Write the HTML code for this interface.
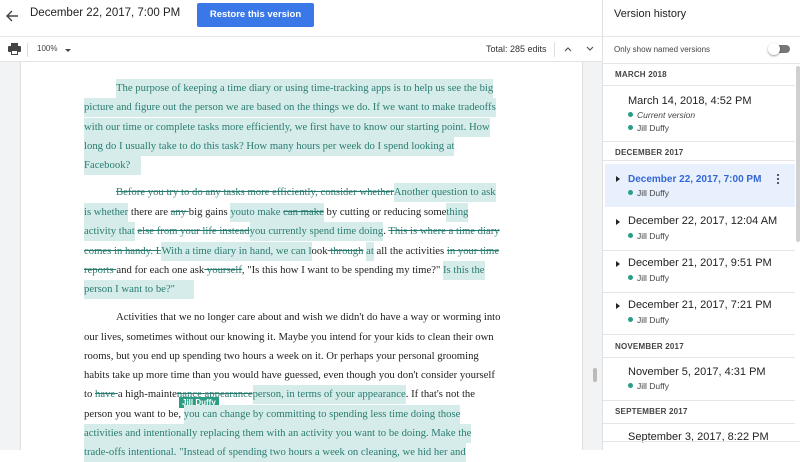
<!DOCTYPE html>
<html><head><meta charset="utf-8"><style>
*{margin:0;padding:0;box-sizing:border-box}
body{width:800px;height:450px;overflow:hidden;background:#fff;font-family:"Liberation Sans",sans-serif;position:relative;color:#202124}
.abs{position:absolute;white-space:nowrap}
#doc{position:absolute;left:0;top:62px;width:602px;height:388px;background:#f1f3f4}
#page{position:absolute;left:20px;top:0;width:563px;height:388px;background:#fff;border-left:1px solid #ddd;border-right:1px solid #ddd}
.ln{position:absolute;white-space:nowrap;font-family:"Liberation Serif",serif;font-size:10.7px;color:#222;line-height:19px}
.h{background:#d5ecea;color:#2a7c70;padding:3px 0 4px}
.s{text-decoration:line-through;color:#2a7c70}
.side{position:absolute;left:602px;top:0;width:198px;height:450px;border-left:1px solid #e0e0e0;background:#fff}
.hr{position:absolute;left:0;width:192px;height:1px;background:#e6e6e6}
.mon{position:absolute;left:12px;font-size:8px;font-weight:bold;color:#444;letter-spacing:.2px}
.dt{position:absolute;left:25px;font-size:11px;color:#222;white-space:nowrap}
.au{position:absolute;left:25px;font-size:8.5px;color:#444;white-space:nowrap}
.au:before{content:"";display:inline-block;width:5px;height:5px;border-radius:50%;background:#2a9d84;margin-right:4px;vertical-align:1px}
.tri{position:absolute;left:13px;width:0;height:0;border-left:4px solid #222;border-top:3.5px solid transparent;border-bottom:3.5px solid transparent}
</style></head><body>
<svg class="abs" style="left:5px;top:9px" width="14" height="14" viewBox="0 0 14 14"><path d="M13 7H2M7 2L2 7l5 5" stroke="#444" stroke-width="1.4" fill="none"/></svg>
<div class="abs" style="left:30px;top:7px;font-size:11.5px;color:#222">December 22, 2017, 7:00 PM</div>
<div class="abs" style="left:197px;top:3px;width:117px;height:24px;background:#3b78e7;border-radius:2px;color:#fff;font-size:9.5px;font-weight:bold;text-align:center;line-height:24px">Restore this version</div>
<div class="abs" style="left:0;top:36px;width:602px;height:1px;background:#e8e8e8"></div>
<svg class="abs" style="left:8px;top:43px" width="13" height="12" viewBox="0 0 13 12"><rect x="3" y="0" width="7" height="3" fill="#444"/><rect x="0" y="3" width="13" height="6" rx="1" fill="#444"/><rect x="3" y="7" width="7" height="5" fill="#444"/><rect x="4" y="8" width="5" height="3" fill="#fff"/></svg>
<div class="abs" style="left:27px;top:43px;width:1px;height:14px;background:#ddd"></div>
<div class="abs" style="left:37px;top:44px;font-size:8px;color:#444">100%</div>
<div class="abs" style="left:65px;top:49px;border-left:3px solid transparent;border-right:3px solid transparent;border-top:3px solid #444"></div>
<div class="abs" style="left:486px;top:44px;font-size:9px;color:#333">Total: 285 edits</div>
<div class="abs" style="left:554px;top:42px;width:1px;height:15px;background:#ddd"></div>
<svg class="abs" style="left:564px;top:46px" width="8" height="6"><path d="M1 5L4 2l3 3" stroke="#555" stroke-width="1.2" fill="none"/></svg>
<svg class="abs" style="left:586px;top:46px" width="8" height="6"><path d="M1 1l3 3 3-3" stroke="#555" stroke-width="1.2" fill="none"/></svg>
<div class="abs" style="left:0;top:61px;width:602px;height:2px;background:#e4e4e4"></div>
<div id="doc"><div id="page"></div>
<div class="abs" style="left:593px;top:306px;width:4px;height:14px;background:#bbb;border-radius:2px"></div></div>
<div class="ln" style="left:116px;top:79px"><span class="h">The purpose of keeping a time diary or using time-tracking apps is to help us see the big</span></div>
<div class="ln" style="left:84px;top:98px"><span class="h">picture and figure out the person we are based on the things we do. If we want to make tradeoffs</span></div>
<div class="ln" style="left:84px;top:118px"><span class="h">with our time or complete tasks more efficiently, we first have to know our starting point. How</span></div>
<div class="ln" style="left:84px;top:137px"><span class="h">long do I usually take to do this task? How many hours per week do I spend looking at</span></div>
<div class="ln" style="left:84px;top:156px"><span class="h">Facebook?&nbsp;&nbsp;&nbsp;&nbsp;</span></div>
<div class="ln" style="left:116px;top:183px"><span class="s">Before you try to do any tasks more efficiently, consider whether</span><span class="h">Another question to ask</span></div>
<div class="ln" style="left:84px;top:203px"><span class="h">is whether</span> there are <span class="s">any </span>big gains <span class="h">you</span><span class="h">to make <span class="s">can make</span></span> by cutting or reducing some<span class="h">thing</span></div>
<div class="ln" style="left:84px;top:222px"><span class="h">activity that</span> <span class="s">else from your life instead</span><span class="h">you currently spend time doing</span>. <span class="s">This is where a time diary</span></div>
<div class="ln" style="left:84px;top:242px"><span class="s">comes in handy. L</span><span class="h">With a time diary in hand, we can l</span>ook<span class="s"> through</span> <span class="h">at</span> all the activities <span class="s">in your time</span></div>
<div class="ln" style="left:84px;top:261px"><span class="s">reports </span>and for each one ask<span class="s"> yourself</span>, "Is this how I want to be spending my time?" <span class="h">Is this the</span></div>
<div class="ln" style="left:84px;top:280px"><span class="h">person I want to be?"&nbsp;&nbsp;&nbsp;&nbsp;&nbsp;&nbsp;&nbsp;</span></div>
<div class="ln" style="left:116px;top:308px">Activities that we no longer care about and wish we didn't do have a way or worming into</div>
<div class="ln" style="left:84px;top:328px">our lives, sometimes without our knowing it. Maybe you intend for your kids to clean their own</div>
<div class="ln" style="left:84px;top:347px">rooms, but you end up spending two hours a week on it. Or perhaps your personal grooming</div>
<div class="ln" style="left:84px;top:366px">habits take up more time than you would have guessed, even though you don't consider yourself</div>
<div class="ln" style="left:84px;top:385px">to <span class="s">have </span>a high-mainte<span class="s">nance appearance</span><span class="h">person, in terms of your appearance</span>. If that's not the</div>
<div class="abs" style="left:179px;top:397px;background:#2a9d84;color:#fff;font-size:8px;font-weight:bold;padding:1px 3px">Jill Duffy</div>
<div class="ln" style="left:84px;top:405px">person you want to be, <span class="h">you can change by committing to spending less time doing those</span></div>
<div class="ln" style="left:84px;top:424px"><span class="h">activities and intentionally replacing them with an activity you want to be doing. Make the</span></div>
<div class="ln" style="left:84px;top:443px"><span class="h">trade-offs intentional. "Instead of spending two hours a week on cleaning, we hid her and</span></div>
<div class="side">
<div class="abs" style="left:11px;top:8px;font-size:11px;color:#222">Version history</div>
<div class="hr" style="top:36px;width:198px"></div>
<div class="abs" style="left:11px;top:45px;font-size:8px;color:#444">Only show named versions</div>
<div class="abs" style="left:170px;top:45px;width:17px;height:8px;border-radius:4px;background:#777"></div>
<div class="abs" style="left:165px;top:43px;width:12px;height:12px;border-radius:50%;background:#fff;box-shadow:0 1px 2px rgba(0,0,0,.4)"></div>
<div class="hr" style="top:63px;width:198px"></div>
<div class="mon" style="top:70px">MARCH 2018</div>
<div class="hr" style="top:85px"></div>
<div class="dt" style="top:95px">March 14, 2018, 4:52 PM</div>
<div class="au" style="top:110px;font-style:italic">Current version</div>
<div class="au" style="top:123px">Jill Duffy</div>
<div class="hr" style="top:141px"></div>
<div class="mon" style="top:148px">DECEMBER 2017</div>
<div class="hr" style="top:160px"></div>
<div class="abs" style="left:2px;top:164px;width:190px;height:43px;background:#e8f0fe"></div>
<div class="tri" style="top:176px"></div>
<div class="dt" style="top:174px;color:#3367d6;font-weight:bold;font-size:10px">December 22, 2017, 7:00 PM</div>
<div class="au" style="top:188px">Jill Duffy</div>
<div class="abs" style="left:174px;top:173px;width:2px;height:12px;background:radial-gradient(circle,#333 0.9px,transparent 1.1px) 0 0/2px 4px"></div>
<div class="tri" style="top:219px"></div>
<div class="dt" style="top:215px">December 22, 2017, 12:04 AM</div>
<div class="au" style="top:231px">Jill Duffy</div>
<div class="hr" style="top:250px"></div>
<div class="tri" style="top:261px"></div>
<div class="dt" style="top:257px">December 21, 2017, 9:51 PM</div>
<div class="au" style="top:273px">Jill Duffy</div>
<div class="hr" style="top:292px"></div>
<div class="tri" style="top:303px"></div>
<div class="dt" style="top:299px">December 21, 2017, 7:21 PM</div>
<div class="au" style="top:315px">Jill Duffy</div>
<div class="hr" style="top:334px"></div>
<div class="mon" style="top:342px">NOVEMBER 2017</div>
<div class="hr" style="top:357px"></div>
<div class="dt" style="top:366px">November 5, 2017, 4:31 PM</div>
<div class="au" style="top:381px">Jill Duffy</div>
<div class="hr" style="top:400px"></div>
<div class="mon" style="top:407px">SEPTEMBER 2017</div>
<div class="hr" style="top:423px"></div>
<div class="dt" style="top:431px">September 3, 2017, 8:22 PM</div>
<div class="abs" style="left:193px;top:66px;width:4px;height:176px;background:#d0d0d0;border-radius:2px"></div>
<div class="hr" style="top:441px;width:198px"></div>
</div>
</body></html>
